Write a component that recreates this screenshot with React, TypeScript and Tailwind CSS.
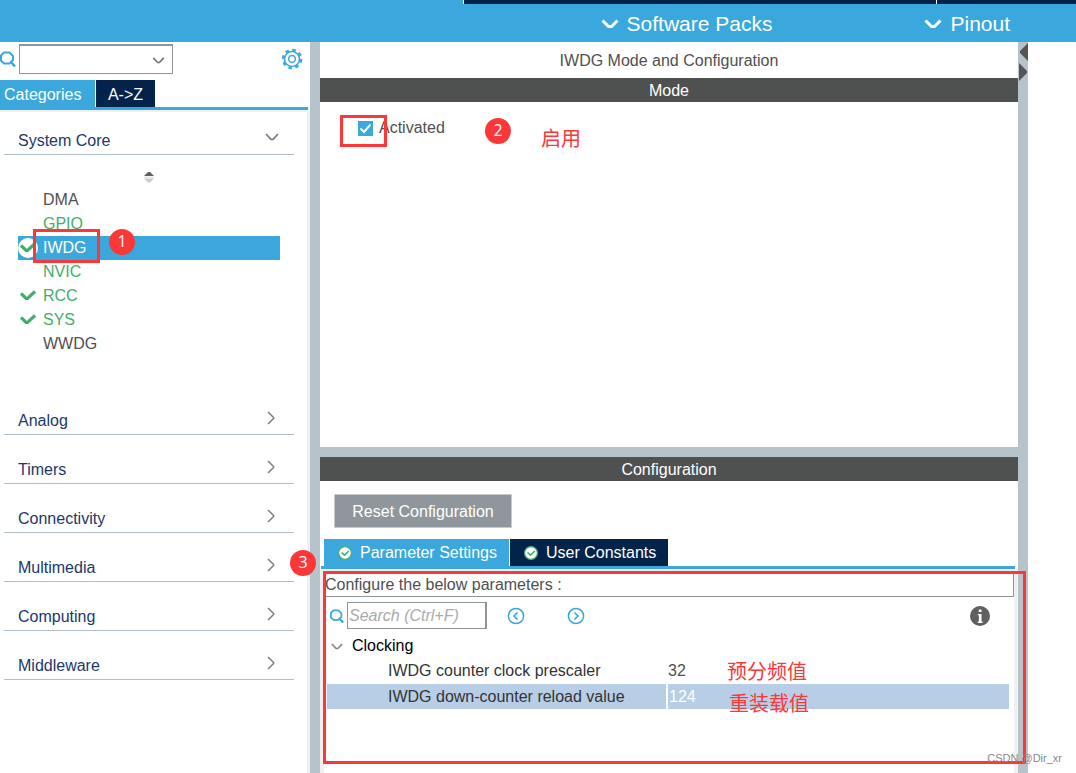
const peripherals = [
  { name: "DMA", color: "text-[#505050]", checked: false },
  { name: "GPIO", color: "text-[#45ad6c]", checked: false },
  { name: "IWDG", color: "text-white", checked: true, selected: true },
  { name: "NVIC", color: "text-[#45ad6c]", checked: false },
  { name: "RCC", color: "text-[#45ad6c]", checked: true },
  { name: "SYS", color: "text-[#45ad6c]", checked: true },
  { name: "WWDG", color: "text-[#505050]", checked: false },
];

const categories = ["Analog", "Timers", "Connectivity", "Multimedia", "Computing", "Middleware"];

const SearchIcon = ({ className }: { className: string }) => (
  <svg viewBox="0 0 16 16" className={className} fill="none" stroke="#3aa8dc">
    <path d="M4 1.500H9.500L13 5V9L9.500 12.500H4L1 9.500V4.500Z" strokeWidth="2" strokeLinejoin="round" />
    <path d="M10.500 10.500L15 15.500" strokeWidth="2.500" />
  </svg>
);

const ChevronDown = ({ className }: { className: string }) => (
  <svg viewBox="0 0 14 8" className={className} fill="none" stroke="currentColor">
    <path d="M1 1L6 6.300H8L13 1" strokeWidth="1.800" />
  </svg>
);

const ChevronRight = () => (
  <svg viewBox="0 0 8 14" className="w-2 h-[14px] text-[#808080]" fill="none" stroke="currentColor">
    <path d="M1 1L6.600 6.500V7.500L1 13" strokeWidth="1.600" />
  </svg>
);

const MenuChevron = () => (
  <svg viewBox="0 0 18 11" className="w-[18px] h-[11px]" fill="none" stroke="white">
    <path d="M1.500 1.500L7.500 7.500H10.500L16.500 1.500" strokeWidth="3" />
  </svg>
);

const GearIcon = () => (
  <svg viewBox="0 0 22 22" className="w-[22px] h-[22px]" fill="none" stroke="#3aa8dc">
    <circle cx="11" cy="11" r="9" strokeWidth="2.600" strokeDasharray="3.500 3.569" />
    <circle cx="11" cy="11" r="7.500" strokeWidth="1.600" />
    <circle cx="11" cy="11" r="3.400" strokeWidth="1.500" />
  </svg>
);

const GreenCheck = () => (
  <svg viewBox="0 0 16 12" className="w-4 h-3" fill="none" stroke="#45ad6c">
    <path d="M1 3.500L6 8.500H7.500L15 1.500" strokeWidth="3.200" />
  </svg>
);

const StatusIcon = () => (
  <svg viewBox="0 0 14 14" className="w-[14px] h-[14px]" fill="none" stroke="#45ad6c">
    <circle cx="7" cy="7" r="6.400" fill="white" strokeWidth="1.200" />
    <path d="M3.500 6.500L6.500 9.200L10.800 5" strokeWidth="1.600" />
  </svg>
);

const CircleArrow = ({ path }: { path: string }) => (
  <svg viewBox="0 0 18 18" className="w-[18px] h-[18px]" fill="none" stroke="#3aa8dc">
    <circle cx="9" cy="9" r="7.600" strokeWidth="1.500" />
    <path d={path} strokeWidth="1.700" />
  </svg>
);

const InfoIcon = () => (
  <svg viewBox="0 0 20 20" className="w-5 h-5">
    <circle cx="10" cy="10" r="10" fill="#606060" />
    <path d="M8.800 3.500H11.500V6H8.800ZM7.800 8H11.500V15.500H12.500V17H7.800V15.500H8.900V9.300H7.800Z" fill="white" />
  </svg>
);

const Badge = ({ n, className }: { n: number; className: string }) => (
  <span
    className={`absolute z-20 flex h-[26px] w-[26px] items-center justify-center rounded-full bg-[#fc3737] pb-[2px] font-['Open_Sans',sans-serif] text-base leading-none text-white ${className}`}
  >
    {n}
  </span>
);

const Note = ({ text, className }: { text: string; className: string }) => (
  <span
    className={`absolute z-20 whitespace-nowrap font-['Noto_Sans_CJK_SC',sans-serif] text-xl leading-6 text-[#fc3737] ${className}`}
  >
    {text}
  </span>
);

const Header = () => (
  <header className="bg-[#3aa8dc] h-[42px] flex flex-col text-white">
    <div className="flex h-1 pl-[43%]">
      <div className="flex-1 bg-[#03234b] border-l border-white" />
      <div className="w-[140px] bg-[#03234b] border-l border-white" />
    </div>
    <nav className="flex flex-1 items-center justify-end pt-[2px] pr-[66px] text-[21px]">
      <button className="flex items-center gap-2 mr-[152px]">
        <MenuChevron />
        Software Packs
      </button>
      <button className="flex items-center gap-2">
        <MenuChevron />
        Pinout
      </button>
    </nav>
  </header>
);

const Sidebar = () => (
  <aside className="w-[310px] shrink-0 bg-white flex flex-col">
    <div className="flex items-center h-[38px] pb-1">
      <SearchIcon className="w-4 h-4 shrink-0" />
      <div className="relative ml-[3px]">
        <select
          aria-label="Search peripheral"
          className="appearance-none block w-[154px] h-[30px] bg-white border border-t-2 border-[#8d959b] outline-none"
        >
          <option></option>
        </select>
        <ChevronDown className="absolute right-2 top-[13px] w-[13px] h-[7px] text-[#707070] pointer-events-none" />
      </div>
      <button aria-label="Settings" className="ml-auto mr-[7px]">
        <GearIcon />
      </button>
    </div>
    <div role="tablist" className="flex gap-px mr-[2px] border-b-3 border-[#3aa8dc] text-white">
      <button role="tab" aria-selected="true" className="h-[27px] w-[95px] pl-1 pt-[2px] text-left bg-[#3aa8dc]">
        Categories
      </button>
      <button role="tab" aria-selected="false" className="h-[27px] w-[59px] pt-[2px] bg-[#03234b]">
        A-&gt;Z
      </button>
    </div>
    <div className="flex-1 border-t-2 border-r-3 border-[#f0f0f0] pl-1 pr-[13px]">
      <button className="flex w-full h-[43px] items-end justify-between border-b border-[#b2bfca] pb-px pl-[14px] pr-[15px] text-[#22376b]">
        System Core
        <ChevronDown className="w-[14px] h-2 text-[#808080] mb-3" />
      </button>
      <div className="flex justify-center pt-4 pb-[5px]">
        <svg viewBox="0 0 12 12" className="w-3 h-3">
          <path d="M1 5L4 2L5 1H7L8 2L11 5Z" fill="#606060" />
          <path d="M1 7.500L4 10.500L5 11.500H7L8 10.500L11 7.500Z" fill="#cccccc" />
          <path d="M1 6.200H11" stroke="#dddddd" />
        </svg>
      </div>
      <ul className="ml-[14px] mr-[14px]">
        {peripherals.map((p) => (
          <li key={p.name} className="relative">
            <button
              className={`flex w-full h-6 items-center text-left ${p.color} ${p.selected ? "bg-[#3aa8dc]" : ""}`}
            >
              <span
                className={`flex h-5 w-5 items-center justify-center rounded-full ${p.selected ? "bg-white" : ""}`}
              >
                {p.checked && <GreenCheck />}
              </span>
              <span className="ml-[5px]">{p.name}</span>
            </button>
            {p.selected && (
              <>
                <span className="absolute z-10 left-[15px] -top-[7px] h-[34px] w-[67px] border-3 border-[#fc3737]" />
                <Badge n={1} className="left-[91px] -top-[7px]" />
              </>
            )}
          </li>
        ))}
      </ul>
      <div className="mt-[30px]">
        {categories.map((c) => (
          <button
            key={c}
            className="flex w-full h-[49px] items-end justify-between border-b border-[#b2bfca] pb-px pl-[14px] pr-[19px] text-[#22376b]"
          >
            {c}
            <span className="pb-2">
              <ChevronRight />
            </span>
          </button>
        ))}
      </div>
    </div>
  </aside>
);

const ModePanel = () => (
  <section className="relative bg-white h-[405px]">
    <h1 className="h-9 leading-[38px] text-center text-[#505050]">IWDG Mode and Configuration</h1>
    <h2 className="h-6 leading-[26px] text-center text-white bg-[#4f5150]">Mode</h2>
    <div className="flex pl-[38px] pt-[14px]">
      <label className="relative flex items-center gap-[6px] h-6 text-[#505050]">
        <input
          type="checkbox"
          defaultChecked
          className="peer appearance-none w-[15px] h-[15px] border border-[#3aa8dc] checked:bg-[#3aa8dc]"
        />
        <svg
          viewBox="0 0 15 15"
          className="absolute left-0 top-[5px] w-[15px] h-[15px] opacity-0 peer-checked:opacity-100"
          fill="none"
          stroke="white"
        >
          <path d="M2.500 7.500L6 11L12.500 3.500" strokeWidth="2" />
        </svg>
        Activated
      </label>
    </div>
    <span className="pointer-events-none absolute left-5 top-[73px] w-[47px] h-8 border-3 border-[#fc3737]" />
    <Badge n={2} className="left-[165px] top-[76px]" />
    <Note text="启用" className="left-[221px] top-[84px]" />
  </section>
);

const ConfigurationPanel = () => (
  <section className="relative flex-1 bg-white flex flex-col">
    <h2 className="h-6 leading-[26px] text-center text-white bg-[#4f5150]">Configuration</h2>
    <div className="pl-[14px] pt-[13px] pb-[11px]">
      <button className="block w-[178px] h-[34px] pt-[2px] bg-[#8f979d] border border-[#c5cacd] text-white">
        Reset Configuration
      </button>
    </div>
    <div role="tablist" className="flex gap-px ml-px mr-[3px] pl-[3px] border-b-3 border-[#3aa8dc] text-white">
      <button
        role="tab"
        aria-selected="true"
        className="flex items-center gap-2 h-[27px] w-[185px] pl-[14px] bg-[#3aa8dc] whitespace-nowrap"
      >
        <StatusIcon />
        Parameter Settings
      </button>
      <button
        role="tab"
        aria-selected="false"
        className="flex items-center gap-2 h-[27px] w-[158px] pl-[14px] bg-[#03234b] whitespace-nowrap"
      >
        <StatusIcon />
        User Constants
      </button>
    </div>
    <div className="flex-1 border-t-2 border-x-4 border-[#f0f0f0]">
      <p className="h-[26px] leading-7 pl-px border-b border-r border-[#8d959b] text-[#505050]">
        Configure the below parameters :
      </p>
      <div className="flex items-center h-9 pt-px pl-[6px] pr-6">
        <SearchIcon className="w-[14px] h-[14px]" />
        <input
          aria-label="Search parameters"
          placeholder="Search (Ctrl+F)"
          className="ml-[3px] w-[140px] h-[27px] border border-r-2 border-[#8d959b] pl-px pt-px italic outline-none placeholder:text-[#aaaaaa]"
        />
        <button aria-label="Previous match" className="ml-5">
          <CircleArrow path="M10.500 5.500L7 9L10.500 12.500" />
        </button>
        <button aria-label="Next match" className="ml-[42px]">
          <CircleArrow path="M7.500 5.500L11 9L7.500 12.500" />
        </button>
        <button aria-label="Information" className="ml-auto">
          <InfoIcon />
        </button>
      </div>
      <div className="relative pl-[3px] pr-[5px]">
        <table className="w-full table-fixed border-collapse text-left text-[#333333]">
          <tbody>
            <tr className="h-[25px]">
              <th scope="rowgroup" className="w-[340px] p-0 pt-px font-normal text-black">
                <span className="flex items-center gap-[9px] pl-1">
                  <ChevronDown className="w-3 h-[7px] text-[#808080]" />
                  Clocking
                </span>
              </th>
              <td></td>
            </tr>
            <tr className="h-[25px]">
              <th scope="row" className="p-0 pt-px pl-[61px] font-normal whitespace-nowrap">
                IWDG counter clock prescaler
              </th>
              <td className="p-0 pt-px pl-px text-[#505050]">32</td>
            </tr>
            <tr className="h-[25px] bg-[#b8cee6] border-t border-white">
              <th scope="row" className="p-0 pt-px pl-[61px] font-normal whitespace-nowrap border-r-2 border-white">
                IWDG down-counter reload value
              </th>
              <td className="p-0 pt-px pl-px text-white">124</td>
            </tr>
          </tbody>
        </table>
        <Note text="预分频值" className="left-[403px] top-[26px]" />
        <Note text="重装载值" className="left-[405px] top-[58px]" />
      </div>
    </div>
    <span className="pointer-events-none absolute z-10 left-[3px] -right-2 top-[114px] bottom-[9px] border-3 border-[#fc3737]" />
    <Badge n={3} className="-left-[30px] top-[93px]" />
  </section>
);

export default function App() {
  return (
    <div className="relative min-h-screen flex flex-col bg-white font-['Liberation_Sans',Arial,sans-serif] text-base">
      <Header />
      <div className="flex flex-1 pr-12">
        <Sidebar />
        <main className="flex-1 flex flex-col gap-[10px] pl-[10px] bg-[#b7c3ca]">
          <ModePanel />
          <ConfigurationPanel />
        </main>
        <div className="w-[10px] shrink-0 bg-[#b7c3ca]">
          <svg viewBox="0 0 10 40" className="w-[10px] h-10" fill="#555555">
            <path d="M10 1V19L2 11V9Z" />
            <path d="M1 21V39L9 31V29Z" />
          </svg>
        </div>
      </div>
      <span className="absolute z-20 right-[14px] bottom-2 text-[11px] leading-[14px] text-[#888888]">
        CSDN @Dir_xr
      </span>
    </div>
  );
}
